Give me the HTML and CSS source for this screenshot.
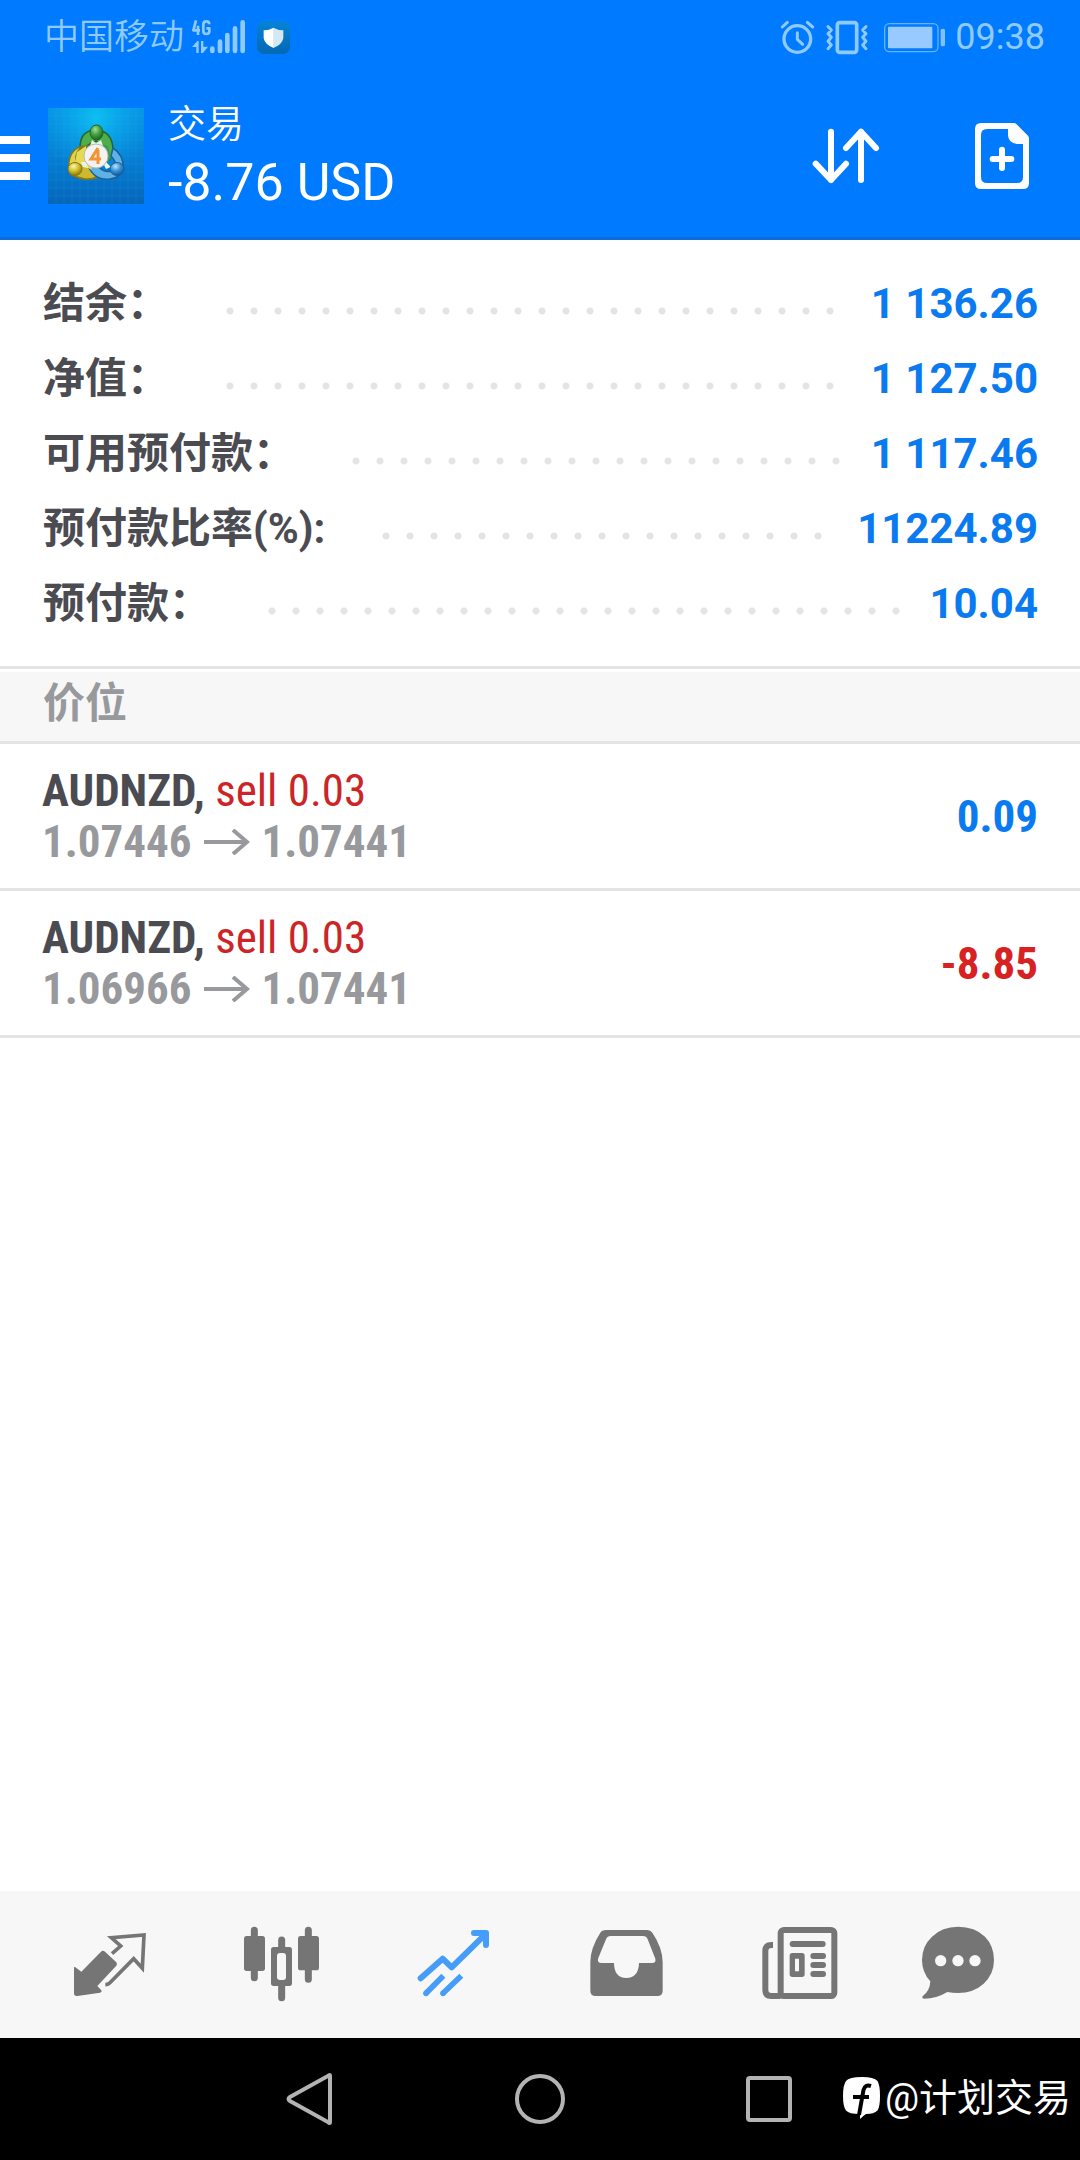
FILE: index.html
```html
<!DOCTYPE html>
<html lang="zh-CN">
<head>
<meta charset="utf-8">
<meta name="viewport" content="width=device-width, initial-scale=1">
<title>交易</title>
<link rel="stylesheet" href="styles.css">
</head>
<body>
<div class="app">
  <header class="top">
    <div class="status">
      <div class="status-group">
        <span class="carrier">中国移动</span>
        <svg class="icon-signal" viewBox="576 54 162 108" aria-label="4G">
          <g fill="none" stroke="#8fcaff" stroke-width="8" stroke-linejoin="round">
            <path d="M588 58L580 88H600M594 74V102"/>
            <path d="M628 70Q628 61 619 61Q610 61 610 70V90Q610 99 619 99Q628 99 628 91V82H619"/>
          </g>
          <path fill="#8fcaff" d="M576 138L592 120H596V156H589V138zM603 120H610V137H624L609 156H603z"/>
          <g stroke="#8fcaff" stroke-width="14" stroke-linecap="round">
            <path d="M637 143V150M660 122V150M682 102V150M705 82V150M728 64V150"/>
          </g>
        </svg>
        <svg class="icon-shield" viewBox="771 60 99 99" aria-hidden="true">
          <defs><linearGradient id="sh" x2="0" y2="1"><stop offset="0" stop-color="#0584d8"/><stop offset="1" stop-color="#0567b4"/></linearGradient></defs>
          <rect x="771" y="60" width="99" height="99" rx="21" fill="url(#sh)"/>
          <path d="M820 80Q835 88 850 88V112Q846 132 820 141Z" fill="#d3e8f2"/>
          <path d="M821 80Q806 88 791 88V112Q795 132 821 141Z" fill="#fff"/>
        </svg>
      </div>
      <div class="status-group">
        <svg class="icon-alarm" viewBox="120 57 108 105" aria-hidden="true">
          <g fill="none" stroke="#8fcaff" stroke-linecap="round">
            <circle cx="172" cy="114" r="40" stroke-width="10"/>
            <path d="M172 95V115L188 130" stroke-width="9"/>
            <path d="M127 78L142 64M202 64L218 78" stroke-width="9"/>
          </g>
        </svg>
        <svg class="icon-vibrate" viewBox="255 57 132 105" aria-hidden="true">
          <g fill="none" stroke="#8fcaff" stroke-width="9" stroke-linecap="round" stroke-linejoin="round">
            <rect x="292" y="65" width="58" height="89" rx="7" stroke-width="11"/>
            <path d="M264 77L274 87L264 98L274 109L264 121L274 132L264 143M378 77L368 87L378 98L368 109L378 121L368 132L378 143"/>
          </g>
        </svg>
        <svg class="icon-battery" viewBox="431 57 186 105" aria-hidden="true">
          <rect x="433" y="68" width="160" height="84" rx="14" fill="none" stroke="#66b2ff" stroke-width="4"/>
          <rect x="443" y="77" width="133" height="65" rx="3" fill="#99caff"/>
          <rect x="601" y="83" width="13" height="53" rx="5" fill="#80c0ff"/>
        </svg>
        <span class="clock">09:38</span>
      </div>
    </div>
    <div class="bar">
      <button class="menu" type="button" aria-label="菜单"><span></span><span></span><span></span></button>
      <svg class="logo" viewBox="0 0 96 96" aria-hidden="true">
        <defs>
          <linearGradient id="bg" x2="0" y2="1"><stop offset="0" stop-color="#0794e6"/><stop offset=".5" stop-color="#067fd4"/><stop offset="1" stop-color="#0566bb"/></linearGradient>
          <radialGradient id="glow" cx=".5" cy=".1" r=".6"><stop offset="0" stop-color="#0cc0f2"/><stop offset="1" stop-color="#0a9fe8" stop-opacity="0"/></radialGradient>
          <radialGradient id="g" cx=".4" cy=".3" r=".7"><stop offset="0" stop-color="#a5dc9b"/><stop offset=".5" stop-color="#45a243"/><stop offset="1" stop-color="#176a22"/></radialGradient>
          <radialGradient id="y" cx=".4" cy=".3" r=".7"><stop offset="0" stop-color="#fbf6a8"/><stop offset=".5" stop-color="#d5c12f"/><stop offset="1" stop-color="#8c7a12"/></radialGradient>
          <radialGradient id="b" cx=".4" cy=".3" r=".7"><stop offset="0" stop-color="#bfe4fb"/><stop offset=".5" stop-color="#3a95d6"/><stop offset="1" stop-color="#0d5a9e"/></radialGradient>
        </defs>
        <path fill="url(#bg)" d="M0 0H96V96H0z"/>
        <path fill="url(#glow)" d="M0 0H96V96H0z"/>
        <path d="M8 0V96M16 0V96M24 0V96M32 0V96M40 0V96M48 0V96M56 0V96M64 0V96M72 0V96M80 0V96M88 0V96M0 8H96M0 16H96M0 24H96M0 32H96M0 40H96M0 48H96M0 56H96M0 64H96M0 72H96M0 80H96M0 88H96" stroke="#5cc4ff" stroke-opacity=".1"/>
        <path d="M32 40Q32 22 48 22Q65 23 65 43L62 51Q58 38 48 33Q38 36 36 44z" fill="#4fae4a" stroke="#23682a" stroke-width="1.5"/>
        <path d="M41 38Q30 38 28 48Q26 61 37 66L48 70Q38 72 32 70Q20 66 21 54Q23 40 36 38z" fill="#e0d24a" stroke="#857717" stroke-width="1.5"/>
        <path d="M22 63Q24 54 36 57L52 64Q48 72 37 71Q29 70 22 66z" fill="#cdb92e" stroke="#857717" stroke-width="1.5"/>
        <path d="M65 40Q76 47 75 60Q73 70 62 71Q47 73 40 58L51 59Q56 65 64 63Q72 58 63 48z" fill="#5eb2e6" stroke="#1b5f9c" stroke-width="1.5"/>
        <path d="M38 38L29 44L27 54L36 58L44 62L40 50z" fill="#e6da55"/>
        <path d="M48 34L60 38L63 50L56 58L46 60L42 44z" fill="#3f9a55"/>
        <path d="M44 32L48 35L53 32L55 38H42zM33 54L35 59L40 60L38 54zM58 54L63 59L58 61L56 57z" fill="#e9f4e8"/>
        <ellipse cx="48.500" cy="24.500" rx="6.500" ry="7.500" fill="url(#g)" stroke="#1f6628"/>
        <ellipse cx="27" cy="61" rx="7" ry="6.500" fill="url(#y)" stroke="#857717"/>
        <ellipse cx="69" cy="61" rx="7" ry="6.500" fill="url(#b)" stroke="#1b5f9c"/>
        <circle cx="48" cy="48" r="12" fill="#f4f3f1" stroke="#b9b9b9"/>
        <path d="M50 40L43 51H53M50 42V56" fill="none" stroke="#f29432" stroke-width="3"/>
      </svg>
      <div class="titles">
        <h1 class="title">交易</h1>
        <p class="profit">-8.76 USD</p>
      </div>
      <button class="tool" type="button" aria-label="排序">
        <svg class="tool-icon" viewBox="210 360 216 216" aria-hidden="true">
          <path d="M273 395V540M227 491L273 540L318 491M363 540V395M318 444L363 395L408 444" fill="none" stroke="#fff" stroke-width="18" stroke-linecap="round" stroke-linejoin="round"/>
        </svg>
      </button>
      <button class="tool" type="button" aria-label="新订单">
        <svg class="tool-icon" viewBox="678 360 216 216" aria-hidden="true">
          <path fill="#fff" fill-rule="evenodd" d="M723 369H822Q826 369 829 372L864 407Q867 410 867 415V549Q867 567 849 567H723Q705 567 705 549V387Q705 369 723 369zM804 387H741Q723 387 723 405V531Q723 549 741 549H831Q849 549 849 531V432H831Q804 428 804 405z"/>
          <path d="M786 449V504M758 477H814" stroke="#fff" stroke-width="18" stroke-linecap="round"/>
        </svg>
      </button>
    </div>
  </header>

  <main class="content">
    <dl class="summary">
      <div class="line"><dt>结余：</dt><dd>1 136.26</dd></div>
      <div class="line"><dt>净值：</dt><dd>1 127.50</dd></div>
      <div class="line"><dt>可用预付款：</dt><dd>1 117.46</dd></div>
      <div class="line"><dt>预付款比率(%):</dt><dd>11224.89</dd></div>
      <div class="line"><dt>预付款：</dt><dd>10.04</dd></div>
    </dl>
    <h2 class="section">价位</h2>
    <ul class="positions">
      <li class="position">
        <div>
          <p class="deal"><b>AUDNZD,</b> <span class="side">sell 0.03</span></p>
          <p class="prices">1.07446 <svg class="arrow" viewBox="0 0 46 26" aria-hidden="true"><path d="M0 13H43M29 1L43 13L29 25" fill="none" stroke="#98999d" stroke-width="4"/></svg> 1.07441</p>
        </div>
        <span class="result">0.09</span>
      </li>
      <li class="position">
        <div>
          <p class="deal"><b>AUDNZD,</b> <span class="side">sell 0.03</span></p>
          <p class="prices">1.06966 <svg class="arrow" viewBox="0 0 46 26" aria-hidden="true"><path d="M0 13H43M29 1L43 13L29 25" fill="none" stroke="#98999d" stroke-width="4"/></svg> 1.07441</p>
        </div>
        <span class="result loss">-8.85</span>
      </li>
    </ul>
  </main>

  <nav class="tabs">
    <a class="tab" href="#quotes" aria-label="行情">
      <svg viewBox="48 33 324 441"><path fill="#757575" d="M102 262Q105 260 108 263L124 275L183 215Q189 210 195 215L229 247Q233 252 229 257L172 318L184 331Q187 336 180 338L112 348Q102 349 102 340z"/><path d="M216 221L242 198L214 173L312 165L307 265L281 236L209 309Q204 314 196 314" fill="none" stroke="#757575" stroke-width="11"/></svg>
    </a>
    <a class="tab" href="#charts" aria-label="图表">
      <svg viewBox="564 33 324 441"><g fill="#757575"><rect x="612" y="168" width="63" height="105" rx="8"/><rect x="774" y="168" width="63" height="103" rx="8"/><rect x="693" y="201" width="63" height="117" rx="8"/></g><path d="M643 151V293M805 151V298M725 180V205M725 316V353" stroke="#757575" stroke-width="21" stroke-linecap="round"/><rect x="711" y="219" width="27" height="81" rx="9" fill="#f7f7f7"/></svg>
    </a>
    <a class="tab" href="#trade" aria-label="交易" aria-current="page">
      <svg viewBox="1080 33 324 441"><path d="M1142 295L1208 236L1235 262L1335 164" fill="none" stroke="#469df9" stroke-width="18" stroke-linecap="round" stroke-linejoin="round"/><path d="M1302 159H1338V195" fill="none" stroke="#469df9" stroke-width="18" stroke-linecap="round" stroke-linejoin="round"/><path d="M1158 340L1210 287M1209 340L1264 287" stroke="#469df9" stroke-width="17"/><circle cx="1158" cy="340" r="8.500" fill="#469df9"/><circle cx="1209" cy="340" r="8.500" fill="#469df9"/></svg>
    </a>
    <a class="tab" href="#history" aria-label="历史">
      <svg viewBox="96 33 324 441"><path fill="#757575" fill-rule="evenodd" d="M198 150H321Q332 150 337 158Q368 204 368 247V332Q368 348 352 348H167Q151 348 151 332V247Q151 204 181 158Q186 150 198 150zM212 168Q202 168 198 178L174 236Q172 249 184 249H222Q222 293 259 294Q296 293 297 249H336Q349 249 346 236L323 178Q319 168 309 168z"/></svg>
    </a>
    <a class="tab" href="#news" aria-label="新闻">
      <svg viewBox="612 33 324 441"><g fill="none" stroke="#757575" stroke-width="18"><rect x="722" y="150" width="161" height="198" rx="10"/><path d="M699 195H694Q676 195 676 213V330Q676 348 694 348H722"/><path d="M758 192H848M820 228H849M820 255H849M820 282H849" stroke-linecap="round"/></g><path fill="#757575" fill-rule="evenodd" d="M757 219H786Q794 219 794 227V283Q794 291 786 291H757Q749 291 749 283V227Q749 219 757 219zM765 236V274H777V236z"/></svg>
    </a>
    <a class="tab" href="#messages" aria-label="消息">
      <svg viewBox="1128 33 324 441"><path fill="#757575" d="M1254 140Q1305 140 1335 170Q1362 198 1362 240Q1362 282 1331 311Q1300 339 1254 339Q1237 339 1222 336Q1190 356 1152 356Q1144 355 1148 349Q1170 332 1171 304Q1146 277 1146 240Q1146 198 1176 170Q1206 140 1254 140z"/><g fill="#f7f7f7"><circle cx="1202" cy="242" r="17"/><circle cx="1254" cy="242" r="17"/><circle cx="1305" cy="242" r="17"/></g></svg>
    </a>
  </nav>

  <footer class="system">
    <button class="key" type="button" aria-label="返回"><svg viewBox="0 0 54 54"><path d="M46 4V50Q46 52 44 50L6 29Q3 27 6 25L44 4Q46 2 46 4z" fill="none" stroke="#b3b3b3" stroke-width="4"/></svg></button>
    <button class="key" type="button" aria-label="主页"><svg viewBox="0 0 54 54"><circle cx="27" cy="27" r="23" fill="none" stroke="#b3b3b3" stroke-width="4"/></svg></button>
    <button class="key" type="button" aria-label="最近任务"><svg viewBox="0 0 54 54"><rect x="6" y="6" width="42" height="42" rx="2" fill="none" stroke="#b3b3b3" stroke-width="4"/></svg></button>
    <div class="credit">
      <svg class="credit-logo" viewBox="0 0 38 42" aria-hidden="true"><path fill="#fff" d="M19 0Q31 0 34.500 4Q37 8 37 19Q37 30 34.500 33.500Q31 37 23 37Q20 39 17 42V37Q6 37 3 33.500Q0 30 0 19Q0 8 3 4Q6 0 19 0z"/><path d="M28 9Q22 7 20.500 13L16 38M10 20H26" fill="none" stroke="#000" stroke-width="4"/></svg>
      <span>@计划交易</span>
    </div>
  </footer>
</div>
</body>
</html>
```
FILE: styles.css
```css
* { box-sizing: border-box; }

body {
  margin: 0;
  background: #fff;
  color: #4b4b52;
  font-family: Roboto, "Noto Sans CJK SC", sans-serif;
}

h1, h2, p, ul, dl, dd { margin: 0; padding: 0; }
svg { display: block; }
button { border: 0; padding: 0; background: none; }

.app {
  display: flex;
  flex-direction: column;
  min-height: 100vh;
}

/* header */
.top {
  background: #007aff;
  border-bottom: 3px solid #0a6cdb;
  color: #fff;
}

.status {
  display: flex;
  justify-content: space-between;
  align-items: center;
  height: 74px;
  padding: 0 35px 0 44px;
  color: #8fcaff;
  font-size: 36px;
  line-height: 74px;
}

.status-group { display: flex; align-items: center; }
.carrier { width: 144px; padding-top: 2px; font-size: 35px; font-weight: 350; }
.clock { margin-left: 9px; }
.icon-signal { width: 54px; height: 36px; margin-left: 4px; }
.icon-shield { width: 33px; height: 33px; margin-left: 11px; }
.icon-alarm { width: 36px; height: 35px; }
.icon-vibrate { width: 44px; height: 35px; margin-left: 9px; }
.icon-battery { width: 62px; height: 35px; margin-left: 15px; }

.bar {
  display: flex;
  align-items: center;
  height: 163px;
  padding-right: 42px;
}

.menu {
  display: flex;
  flex-direction: column;
  gap: 10px;
  width: 30px;
  margin-top: 4px;
}
.menu span { height: 8px; background: #fff; }

.logo { width: 96px; height: 96px; margin-left: 18px; }

.titles { flex: 1; margin-left: 24px; padding-top: 6px; }
.title { font-size: 38px; font-weight: 350; line-height: 48px; }
.profit { font-size: 52px; line-height: 70px; }

.tool { width: 72px; height: 72px; margin-left: 84px; }
.tool-icon { width: 72px; height: 72px; }

/* account summary */
.summary { padding: 26px 42px 25px 43px; }

.line {
  display: flex;
  height: 75px;
  font-size: 42px;
  font-weight: 700;
  line-height: 75px;
}
.line dt { flex: none; }
.line dd { order: 2; color: #0a7af0; white-space: nowrap; }

/* dotted leader between label and amount */
.line::before {
  content: "";
  order: 1;
  flex: 1;
  margin: 33px 24px 18px 49px;
  background: radial-gradient(circle at 12px 12px, #e4e4e4 3px, transparent 4px) 0 0 / 24px 24px repeat-x;
}

.section {
  height: 78px;
  padding: 0 43px;
  border-top: 3px solid #e4e4e6;
  border-bottom: 3px solid #e4e4e6;
  background: #f7f7f7;
  box-shadow: inset 0 3px #fff;
  color: #98999d;
  font-size: 42px;
  font-weight: 700;
  line-height: 70px;
}

/* open positions */
.positions { list-style: none; }

.position {
  display: flex;
  justify-content: space-between;
  align-items: center;
  height: 147px;
  padding: 0 42px;
  border-bottom: 3px solid #e4e4e6;
  font-family: "Roboto Condensed", Roboto, sans-serif;
  font-size: 45px;
  line-height: 51px;
}

.side { color: #cb2527; }
.prices { display: flex; align-items: center; gap: 12px; color: #98999d; font-weight: 700; }
.arrow { width: 46px; height: 26px; }
.result { color: #0a7af0; font-weight: 700; }
.loss { color: #d82123; }

/* bottom tabs */
.tabs {
  display: flex;
  margin-top: auto;
  padding: 0 24px;
  background: #f7f7f7;
}
.tab { flex: 1; }
.tab svg { width: 108px; height: 147px; margin: 0 auto; }

/* system keys */
.system {
  position: relative;
  display: flex;
  justify-content: center;
  align-items: center;
  gap: 175px;
  height: 122px;
  background: #000;
}
.key svg { width: 54px; height: 54px; }

.credit {
  position: absolute;
  right: 9px;
  top: 32px;
  display: flex;
  align-items: center;
  gap: 4px;
  color: #fff;
  font-size: 38px;
  line-height: 56px;
}
.credit-logo { width: 38px; height: 42px; }
```
